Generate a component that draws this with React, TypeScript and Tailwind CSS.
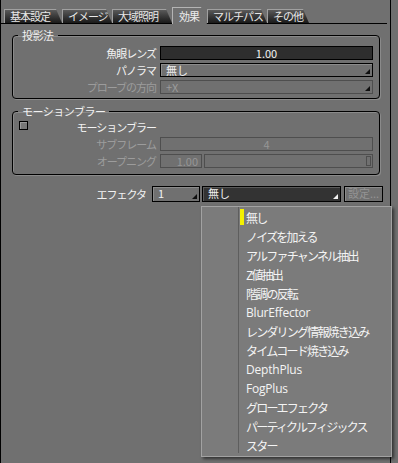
const tabs = [
  { label: '基本設定', w: 'w-[58px]' },
  { label: 'イメージ', w: 'w-[50px]' },
  { label: '大域照明', w: 'w-[60px]' },
  { label: '効果', w: 'w-[35px]', active: true },
  { label: 'マルチパス', w: 'w-[60px]' },
  { label: 'その他', w: 'w-[42px]' },
]

const effects = [
  '無し',
  'ノイズを加える',
  'アルファチャンネル抽出',
  'Z値抽出',
  '階調の反転',
  'BlurEffector',
  'レンダリング情報焼き込み',
  'タイムコード焼き込み',
  'DepthPlus',
  'FogPlus',
  'グローエフェクタ',
  'パーティクルフィジックス',
  'スター',
]

function Tri({ light }: { light?: boolean }) {
  return (
    <svg width="5" height="5" viewBox="0 0 5 5" className="absolute right-[2px] bottom-[2px]">
      <polygon points="5,0 5,5 0,5" fill={light ? '#f2f2f2' : '#101010'} />
    </svg>
  )
}

function Label({ children, disabled }: { children: React.ReactNode; disabled?: boolean }) {
  return (
    <div
      className={
        disabled
          ? 'w-[143px] text-right text-[11px] leading-[14px] tracking-[-1px] text-[#9c9c9c]'
          : 'w-[143px] text-right text-[11px] leading-[14px] tracking-[-1px] text-[#f2f2f2]'
      }
    >
      {children}
    </div>
  )
}

function Row({ children }: { children: React.ReactNode }) {
  return <div className="flex h-[14px] items-center gap-[4px]">{children}</div>
}

export default function App() {
  return (
    <div className="flex h-[463px] w-[398px] overflow-hidden bg-[#707070] font-['Noto_Sans_CJK_JP','Noto_Sans',sans-serif]">
      <div className="relative h-full w-[391px] border-l border-r border-black">
        {/* tabs */}
        <div className="flex h-[24px] w-[386px] items-end border-b border-black pl-[3px]">
          {tabs.map((t) =>
            t.active ? (
              <div
                key={t.label}
                className={`${t.w} relative z-10 -mb-px flex h-[17px] items-center border-t border-l border-[#b4b4b4] bg-[#707070] pl-[6px] text-[11px] tracking-[-1px] text-[#ececec] [clip-path:polygon(0_0,calc(100%_-_6px)_0,100%_100%,0_100%)]`}
              >
                {t.label}
              </div>
            ) : (
              <div
                key={t.label}
                className={`${t.w} flex h-[14px] items-center border-t border-l border-[#a0a0a0] bg-linear-to-b from-[#5a5a5a] to-[#1a1a1a] pl-[5px] text-[11px] tracking-[-1px] text-[#e8e8e8] [clip-path:polygon(0_0,calc(100%_-_6px)_0,100%_100%,0_100%)]`}
              >
                {t.label}
              </div>
            ),
          )}
        </div>

        {/* 投影法 */}
        <fieldset className="ml-[11px] mt-[5px] w-[368px] rounded-[4px] border border-black pb-[4px] shadow-[inset_1px_1px_0_#8a8a8a,1px_1px_0_#8a8a8a]">
          <legend className="ml-[5px] px-[4px] text-[11px] leading-[12px] tracking-[-0.5px] text-[#f2f2f2]">投影法</legend>
          <div className="flex flex-col gap-[3px] pt-[5px]">
            <Row>
              <Label>魚眼レンズ</Label>
              <div className="h-[14px] w-[213px] border border-black bg-[#2e2e2e] text-center text-[11px] leading-[12px] text-[#f2f2f2]">
                1.00
              </div>
            </Row>
            <Row>
              <Label>パノラマ</Label>
              <div className="relative h-[14px] w-[213px] border border-black pl-[5px] text-[11px] leading-[12px] text-[#f2f2f2] shadow-[inset_1px_1px_0_#8c8c8c]">
                無し
                <Tri />
              </div>
            </Row>
            <Row>
              <Label disabled>プローブの方向</Label>
              <div className="relative h-[14px] w-[213px] border border-[#4e4e4e] pl-[5px] text-[11px] leading-[12px] text-[#9c9c9c]">
                +X
                <Tri />
              </div>
            </Row>
          </div>
        </fieldset>

        {/* モーションブラー */}
        <fieldset className="ml-[11px] mt-[6px] w-[368px] rounded-[4px] border border-black pb-[6px] shadow-[inset_1px_1px_0_#8a8a8a,1px_1px_0_#8a8a8a]">
          <legend className="ml-[5px] px-[4px] text-[11px] leading-[12px] tracking-[-0.5px] text-[#f2f2f2]">モーションブラー</legend>
          <div className="flex flex-col gap-[3px] pt-[3px]">
            <div className="relative flex h-[14px] items-center">
              <div className="absolute left-[6px] top-[1px] h-[9px] w-[9px] border border-black bg-[#787878] shadow-[inset_1px_1px_0_#9a9a9a]" />
              <Label>モーションブラー</Label>
            </div>
            <Row>
              <Label disabled>サブフレーム</Label>
              <div className="h-[14px] w-[213px] border border-[#4e4e4e] text-center text-[11px] leading-[12px] text-[#969696]">
                4
              </div>
            </Row>
            <Row>
              <Label disabled>オープニング</Label>
              <div className="flex w-[213px] gap-[2px]">
                <div className="h-[14px] w-[42px] border border-[#4e4e4e] pr-[3px] text-right text-[11px] leading-[12px] text-[#969696]">
                  1.00
                </div>
                <div className="flex h-[14px] flex-1 justify-end border border-[#4e4e4e] p-[1px]">
                  <div className="h-full w-[5px] border border-[#4e4e4e]" />
                </div>
              </div>
            </Row>
          </div>
        </fieldset>

        {/* エフェクタ */}
        <div className="mt-[11px] flex h-[16px] items-center">
          <div className="w-[145px] text-right text-[11px] tracking-[-1px] text-[#f2f2f2]">エフェクタ</div>
          <div className="relative ml-[6px] h-[16px] w-[48px] border border-black pl-[5px] text-[11px] leading-[13px] text-[#f2f2f2] shadow-[inset_1px_1px_0_#8c8c8c]">
            1
            <Tri />
          </div>
          <div className="relative ml-[2px] h-[16px] w-[139px] border border-black bg-[#333333] pl-[5px] text-[11px] leading-[13px] text-[#f2f2f2] shadow-[inset_1px_1px_0_#5a5a5a]">
            無し
            <Tri light />
          </div>
          <div className="ml-[3px] h-[16px] w-[39px] border border-black text-center text-[11px] leading-[13px] text-[#949494] shadow-[inset_1px_1px_0_#8c8c8c]">
            設定...
          </div>
        </div>

        {/* dropdown list */}
        <div className="absolute left-[200px] top-[206px] z-20 h-[251px] w-[191px] border border-[#a2a2a2] bg-[#7b7b7b] shadow-[2px_2px_3px_rgba(0,0,0,0.55)]">
          <div className="absolute bottom-[3px] left-[36px] top-0 w-px bg-[#5e5e5e]" />
          <div className="flex flex-col pt-px">
            {effects.map((e, i) => (
              <div key={e} className="relative flex h-[19px] items-center pl-[44px]">
                {i === 0 && <div className="absolute left-[38px] top-[1px] h-[16px] w-[4px] bg-[#f4f000]" />}
                <span
                  className={
                    /[^\x00-\x7f]/.test(e)
                      ? 'text-[12px] leading-[19px] tracking-[-1.8px] text-[#f4f4f4]'
                      : "font-['Open_Sans',sans-serif] text-[12px] leading-[19px] tracking-[-0.2px] text-[#f4f4f4]"
                  }
                >
                  {e}
                </span>
              </div>
            ))}
          </div>
        </div>
      </div>
    </div>
  )
}
